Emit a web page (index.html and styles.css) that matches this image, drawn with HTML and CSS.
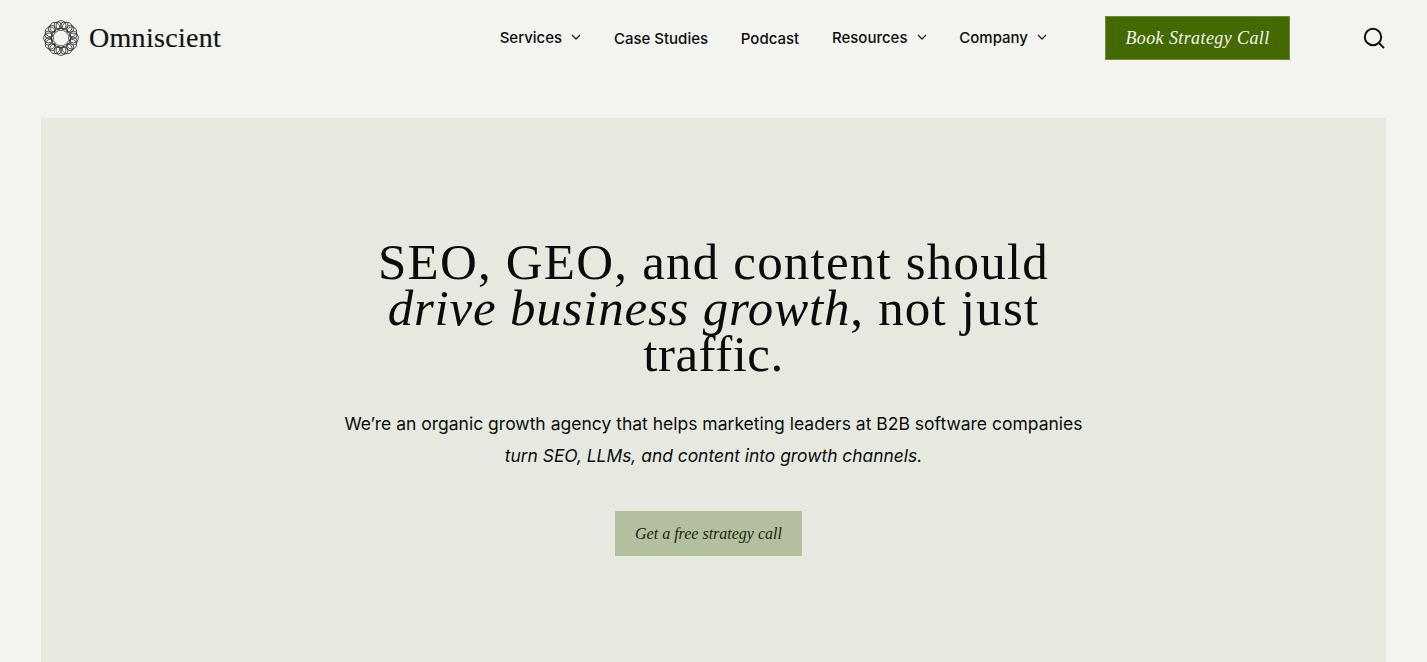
FILE: index.html
```html
<!DOCTYPE html>
<html lang="en">
<head>
<meta charset="utf-8">
<title>Omniscient</title>
<link rel="stylesheet" href="styles.css">
</head>
<body>
<header class="site-header">
  <a class="logo" href="#">
    <svg class="logo-mark" viewBox="0 0 36 36" fill="none" stroke="#2a2a2a" stroke-width="0.8">
      <circle cx="18" cy="18" r="9.6"/>
      <circle cx="30.5" cy="18" r="4.9"/><circle cx="28.83" cy="24.25" r="4.9"/><circle cx="24.25" cy="28.83" r="4.9"/><circle cx="18" cy="30.5" r="4.9"/><circle cx="11.75" cy="28.83" r="4.9"/><circle cx="7.17" cy="24.25" r="4.9"/><circle cx="5.5" cy="18" r="4.9"/><circle cx="7.17" cy="11.75" r="4.9"/><circle cx="11.75" cy="7.17" r="4.9"/><circle cx="18" cy="5.5" r="4.9"/><circle cx="24.25" cy="7.17" r="4.9"/><circle cx="28.83" cy="11.75" r="4.9"/>
      <circle cx="30.56" cy="21.36" r="3.6"/><circle cx="27.19" cy="27.19" r="3.6"/><circle cx="21.36" cy="30.56" r="3.6"/><circle cx="14.64" cy="30.56" r="3.6"/><circle cx="8.81" cy="27.19" r="3.6"/><circle cx="5.44" cy="21.36" r="3.6"/><circle cx="5.44" cy="14.64" r="3.6"/><circle cx="8.81" cy="8.81" r="3.6"/><circle cx="14.64" cy="5.44" r="3.6"/><circle cx="21.36" cy="5.44" r="3.6"/><circle cx="27.19" cy="8.81" r="3.6"/><circle cx="30.56" cy="14.64" r="3.6"/>
    </svg>
    <span class="logo-text">Omniscient</span>
  </a>
  <nav class="nav">
    <a class="nav-item" href="#">Services<svg class="chev" viewBox="0 0 10 6"><path d="M1 1l4 4 4-4"/></svg></a>
    <a class="nav-item low" href="#">Case Studies</a>
    <a class="nav-item low" href="#">Podcast</a>
    <a class="nav-item" href="#">Resources<svg class="chev" viewBox="0 0 10 6"><path d="M1 1l4 4 4-4"/></svg></a>
    <a class="nav-item" href="#">Company<svg class="chev" viewBox="0 0 10 6"><path d="M1 1l4 4 4-4"/></svg></a>
  </nav>
  <a class="cta" href="#">Book Strategy Call</a>
  <svg class="search" viewBox="0 0 22 22" fill="none" stroke="#111" stroke-width="2"><circle cx="10" cy="10" r="8.2"/><path d="M16 16l5 5"/></svg>
</header>
<main class="hero">
  <h1 class="title">SEO, GEO, and content should<br><em class="title-em">drive business growth</em>, not just<br><span class="title-last">traffic.</span></h1>
  <p class="lead">We’re an organic growth agency that helps marketing leaders at B2B software companies<br><em class="lead-em">turn SEO, LLMs, and content into growth channels.</em></p>
  <a class="hero-btn" href="#">Get a free strategy call</a>
</main>
</body>
</html>
```
FILE: styles.css
```css
* { box-sizing: border-box; }
html, body { margin: 0; height: 100%; overflow: hidden; }
body { background: #f3f4ef; color: #0c0c0c; font-family: "Inter", "Liberation Sans", sans-serif; display: flex; flex-direction: column; }
a { color: inherit; text-decoration: none; }
.site-header { height: 76px; flex: none; display: flex; align-items: center; padding: 0 42px 0 43px; }
.logo { display: flex; align-items: center; gap: 10px; }
.logo-mark { width: 36px; height: 36px; }
.logo-text { font-family: "Liberation Serif", serif; font-size: 28px; letter-spacing: 0.3px; color: #141414; -webkit-text-stroke: 0.2px #141414; }
.nav { display: flex; align-items: center; gap: 32.75px; margin-left: auto; padding-bottom: 2px; font-size: 15px; font-weight: 500; }
.nav-item { display: flex; align-items: center; gap: 9px; }
.low { padding-top: 2px; }
.chev { width: 10px; height: 6px; fill: none; stroke: #222; stroke-width: 1.3; }
.cta { width: 185px; height: 44px; margin-left: 58px; background: #436900; border: 1px solid #6d8c38; color: #f3f4ef; display: flex; align-items: center; justify-content: center; font-family: "Liberation Serif", serif; font-style: italic; font-size: 18px; letter-spacing: 0.4px; }
.search { width: 22px; height: 22px; margin-left: 73px; }
.hero { flex: 1; margin: 42px 41px 0; background: #e6e9e0; display: flex; flex-direction: column; align-items: center; padding-top: 121px; }
.title { margin: 0; font-family: "Liberation Serif", serif; font-weight: 400; font-size: 51px; line-height: 46px; letter-spacing: 1.2px; text-align: center; color: #0b0b0b; }
.title-em { letter-spacing: 0.8px; }
.title-last { letter-spacing: 0.5px; }
.lead { margin: 31px 0 0; font-size: 17.5px; line-height: 32px; text-align: center; }
.lead-em { font-size: 17.4px; }
.hero-btn { margin: 39px 10px 0 0; width: 187px; height: 45px; background: #b4bf9f; display: flex; align-items: center; justify-content: center; font-family: "Liberation Serif", serif; font-style: italic; font-size: 16px; color: #1a1f14; }
```
